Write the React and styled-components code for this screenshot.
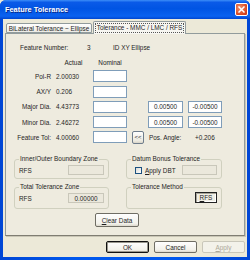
import React from "react";
import styled, {createGlobalStyle} from "styled-components";

const GlobalStyle = createGlobalStyle`
  html, body {
    margin: 0;
    padding: 0;
    background: #ece9d8;
  }
  body {
    font-family: "Liberation Sans", Arial, sans-serif;
    font-size: 6.4px;
    color: #1e1e1e;
  }
`;

//**************************
//Window chrome
//**************************
const Window = styled.div`
  width: 250px;
  height: 260px;
  display: flex;
  flex-direction: column;
  background: linear-gradient(to right, #0046d5, #0058ee 30%, #0058ee 70%, #0046d5);
  border-radius: 6px 6px 0 0;
  overflow: hidden;
`;
const TitleBar = styled.div`
  flex: none;
  height: 19px;
  box-sizing: border-box;
  padding: 0 2px 0 5px;
  display: flex;
  align-items: center;
  justify-content: space-between;
  background: linear-gradient(
    to bottom,
    #3d8ef8 0%,
    #0a5ae8 12%,
    #0054e3 45%,
    #0a62f0 85%,
    #0046d0 100%
  );
`;
const Title = styled.span`
  color: #fff;
  font-weight: bold;
  font-size: 7.4px;
  text-shadow: 1px 1px 0 #0a2a8a;
`;
const CloseBox = styled.div`
  width: 13px;
  height: 13px;
  box-sizing: border-box;
  border: 1px solid #fff;
  border-radius: 2px;
  background: radial-gradient(circle at 35% 35%, #f0906c, #d9461f 70%, #c2381a);
  display: grid;
  place-items: center;
`;
const Client = styled.div`
  flex: 1;
  margin: 0 3px 3px;
  padding: 2px 2px 0;
  background: #ece9d8;
  display: flex;
  flex-direction: column;
`;

//**************************
//Tabs
//**************************
const TabStrip = styled.div`
  height: 12px;
  padding-left: 1px;
  display: flex;
  align-items: flex-end;
  position: relative;
  z-index: 1;
`;
const Tab = styled.div`
  box-sizing: border-box;
  width: ${(props) => (props.active ? "93px" : "86px")};
  height: ${(props) => (props.active ? "13px" : "10px")};
  margin-left: ${(props) => (props.active ? "1px" : "0")};
  margin-bottom: ${(props) => (props.active ? "-1px" : "0")};
  border: 1px solid #919b9c;
  border-bottom: ${(props) => (props.active ? "none" : "1px solid #919b9c")};
  border-radius: 2px 2px 0 0;
  background: ${(props) =>
    props.active ? "#f7f6f1" : "linear-gradient(#fefefe, #ecebe4)"};
  display: flex;
  align-items: center;
  justify-content: center;
  white-space: nowrap;
  padding-bottom: ${(props) => (props.active ? "1px" : "0")};
`;
const FocusText = styled.span`
  outline: 1px dotted #555;
  outline-offset: 0;
  padding: 0 1px;
  line-height: 8px;
`;
const Panel = styled.div`
  height: 203px;
  box-sizing: border-box;
  border: 1px solid #919b9c;
  border-bottom-color: #7f7d72;
  box-shadow: 1px 1px 0 #c9c6b6;
  background: #eeebdf;
  display: flex;
  flex-direction: column;
`;

//**************************
//Feature data
//**************************
const InfoRow = styled.div`
  margin-top: 8.5px;
  height: 9px;
  padding-left: 14px;
  display: flex;
  align-items: center;
`;
const InfoCell = styled.span`
  width: ${(props) => props.w || "auto"};
`;
const DataGrid = styled.div`
  margin-top: 6.5px;
  display: grid;
  grid-template-columns: 45px 42px 34px 21px 35px 5px 34px;
  grid-template-rows: 9px repeat(5, 12px);
  row-gap: 3.25px;
  align-items: center;
`;
const Head = styled.span`
  text-align: center;
  padding-left: ${(props) => props.shift || "0"};
`;
const Label = styled.span`
  text-align: right;
  white-space: nowrap;
`;
const Value = styled.span`
  padding-left: 5px;
`;
const Field = styled.div`
  box-sizing: border-box;
  height: ${(props) => props.h || "12px"};
  width: ${(props) => props.w || "auto"};
  border: 1px solid ${(props) => (props.disabled ? "#c9c7ba" : "#7f9db9")};
  background: ${(props) => (props.disabled ? "#ebe8dc" : "#fff")};
  display: flex;
  align-items: center;
  justify-content: center;
`;
const SmallButton = styled.div`
  box-sizing: border-box;
  width: 12px;
  height: 13px;
  margin-left: 5px;
  border: 1px solid #6f7d8c;
  border-radius: 2px;
  background: linear-gradient(#fefefe, #eceae0 80%, #d8d3c6);
  display: grid;
  place-items: center;
  font-size: 6px;
`;
const AngleCell = styled.div`
  grid-column: 5 / 8;
  display: flex;
  padding-left: 1px;
`;
const AngleLabel = styled.span`
  width: 46px;
`;

//**************************
//Group boxes
//**************************
const GroupGrid = styled.div`
  margin: 11.75px 0 0 8px;
  display: grid;
  grid-template-columns: 95px 96px;
  grid-template-rows: 24px 26px;
  column-gap: 17px;
  row-gap: 4px;
`;
const Group = styled.fieldset`
  margin: 0;
  min-width: 0;
  box-sizing: border-box;
  padding: 0 4px;
  border: 1px solid #d0d0bf;
  border-radius: 3px;
`;
const Legend = styled.legend`
  padding: 0 1px;
  font-size: 6.4px;
  line-height: 8px;
  white-space: nowrap;
`;
const GroupRow = styled.div`
  margin-top: ${(props) => props.top || "2px"};
  height: ${(props) => props.h || "10px"};
  display: flex;
  align-items: center;
  justify-content: ${(props) => props.justify || "space-between"};
`;
const CheckBox = styled.span`
  width: 7px;
  height: 7px;
  box-sizing: border-box;
  margin-left: 4px;
  border: 1px solid #1c5180;
  background: linear-gradient(135deg, #dcdbd5, #fff);
`;
const CheckLabel = styled.span`
  margin-left: 3px;
`;
const Key = styled.span`
  text-decoration: underline;
`;
const MethodButton = styled.div`
  box-sizing: border-box;
  width: 22px;
  height: 11px;
  border: 1px solid #222;
  box-shadow: inset 1px 1px 0 #a8a69a, inset -1px -1px 0 #fff;
  background: #efede4;
  display: grid;
  place-items: center;
`;

//**************************
//Buttons
//**************************
const Button = styled.div`
  box-sizing: border-box;
  width: ${(props) => props.w || "43px"};
  height: ${(props) => props.h || "12px"};
  border: 1px solid
    ${(props) => (props.primary ? "#111" : props.disabled ? "#c9c7ba" : "#6f6d64")};
  border-radius: 2px;
  box-shadow: ${(props) => (props.primary ? "inset 0 0 0 1px #9a988e" : "none")};
  background: ${(props) =>
    props.disabled ? "#f3f2ea" : "linear-gradient(#fefefe, #f2f1ea 80%, #dcd8cc)"};
  color: ${(props) => (props.disabled ? "#aca899" : "#1e1e1e")};
  display: grid;
  place-items: center;
`;
const ClearButton = styled(Button)`
  margin: 4px 0 0 89px;
`;
const ButtonBar = styled.div`
  margin-top: 5px;
  display: flex;
  justify-content: flex-end;
  gap: 5px;
`;

const rows = [
    {label: "Pol-R", value: "2.00030"},
    {label: "AX/Y", value: "0.206"},
    {label: "Major Dia.", value: "4.43773", tol: ["0.00500", "-0.00500"]},
    {label: "Minor Dia.", value: "2.46272", tol: ["0.00500", "-0.00500"]},
];

export default function App() {
    return (
        <>
            <GlobalStyle/>
            <Window>
                <TitleBar>
                    <Title>Feature Tolerance</Title>
                    <CloseBox>
                        <svg width="7" height="7" viewBox="0 0 7 7">
                            <path d="M1 1L6 6M6 1L1 6" stroke="#fff" strokeWidth="1.5" strokeLinecap="square"/>
                        </svg>
                    </CloseBox>
                </TitleBar>
                <Client>
                    <TabStrip>
                        <Tab>BiLateral Tolerance ~ Ellipse</Tab>
                        <Tab active>
                            <FocusText>Tolerance - MMC / LMC / RFS</FocusText>
                        </Tab>
                    </TabStrip>
                    <Panel>
                        <InfoRow>
                            <InfoCell w="67px">Feature Number:</InfoCell>
                            <InfoCell w="26px">3</InfoCell>
                            <InfoCell>ID XY Ellipse</InfoCell>
                        </InfoRow>
                        <DataGrid>
                            <span/>
                            <Head shift="3px">Actual</Head>
                            <Head>Nominal</Head>
                            <span/>
                            <span/>
                            <span/>
                            <span/>
                            {rows.map((r) => (
                                <React.Fragment key={r.label}>
                                    <Label>{r.label}</Label>
                                    <Value>{r.value}</Value>
                                    <Field/>
                                    <span/>
                                    {r.tol ? <Field>{r.tol[0]}</Field> : <span/>}
                                    <span/>
                                    {r.tol ? <Field>{r.tol[1]}</Field> : <span/>}
                                </React.Fragment>
                            ))}
                            <Label>Feature Tol:</Label>
                            <Value>4.00060</Value>
                            <Field/>
                            <SmallButton>&lt;&lt;</SmallButton>
                            <AngleCell>
                                <AngleLabel>Pos. Angle:</AngleLabel>
                                <span>+0.206</span>
                            </AngleCell>
                        </DataGrid>
                        <GroupGrid>
                            <Group>
                                <Legend>Inner/Outer Boundary Zone</Legend>
                                <GroupRow>
                                    <span>RFS</span>
                                    <Field disabled w="36px" h="10px"/>
                                </GroupRow>
                            </Group>
                            <Group>
                                <Legend>Datum Bonus Tolerance</Legend>
                                <GroupRow justify="flex-start">
                                    <CheckBox/>
                                    <CheckLabel><Key>A</Key>pply DBT</CheckLabel>
                                    <Field disabled w="35px" h="10px" style={{marginLeft: "auto"}}/>
                                </GroupRow>
                            </Group>
                            <Group>
                                <Legend>Total Tolerance Zone</Legend>
                                <GroupRow>
                                    <span>RFS</span>
                                    <Field disabled w="36px" h="10px">0.00000</Field>
                                </GroupRow>
                            </Group>
                            <Group>
                                <Legend>Tolerance Method</Legend>
                                <GroupRow top="1px" h="11px" justify="flex-end">
                                    <MethodButton><span><Key>R</Key>FS</span></MethodButton>
                                </GroupRow>
                            </Group>
                        </GroupGrid>
                        <ClearButton w="44px" h="14px">
                            <span><Key>C</Key>lear Data</span>
                        </ClearButton>
                    </Panel>
                    <ButtonBar>
                        <Button primary>OK</Button>
                        <Button>Cancel</Button>
                        <Button disabled><span><Key>A</Key>pply</span></Button>
                    </ButtonBar>
                </Client>
            </Window>
        </>
    );
}
